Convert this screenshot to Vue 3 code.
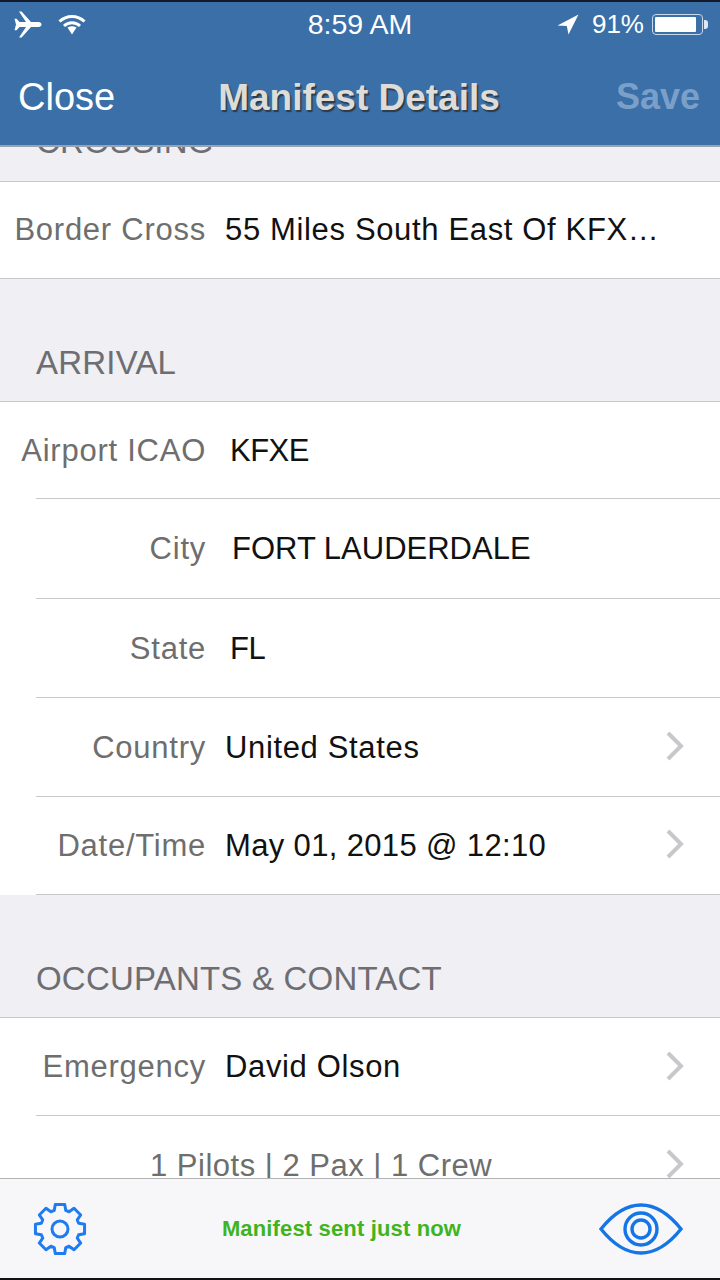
<template>
  <div class="screen">
    <header class="nav">
      <div class="status">
        <div class="status-left">
          <svg class="plane" width="30" height="27" viewBox="0 0 30 27">
            <path d="M14 11 7 .5h2.600L19 11h7.500c1.800 0 3 1 3 2.500s-1.200 2.500-3 2.500H19L9.600 26.500H7L14 16H7.500L4.600 19.200H2.500L4 13.500 2.500 7.800h2.100L7.500 11Z" fill="#fff" />
          </svg>
          <svg class="wifi" width="28" height="21" viewBox="0 0 28 21" fill="none" stroke="#fff" stroke-width="3">
            <path d="M1.500 7.500C8.500.7 19.500.7 26.500 7.500" />
            <path d="M6 12C10.500 7.800 17.500 7.800 22 12" />
            <path d="M9.500 13.500 14 20.500l4.500-7C15.500 11.800 12.500 11.800 9.500 13.500Z" fill="#fff" stroke="none" />
          </svg>
        </div>
        <span class="clock">8:59 AM</span>
        <div class="status-right">
          <svg width="22" height="21" viewBox="0 0 22 21">
            <path d="M21.500.5 11.500 20.500 9.800 12 .5 11.500Z" fill="#fff" />
          </svg>
          <span class="percent">91%</span>
          <div class="battery"><div class="battery-fill" :style="{ width: '91%' }"></div></div>
          <div class="battery-nub"></div>
        </div>
      </div>
      <div class="bar">
        <span class="close">Close</span>
        <span class="title">Manifest Details</span>
        <span class="save">Save</span>
      </div>
    </header>

    <main class="content">
      <section v-for="section in sections" :key="section.title" class="section">
        <h2 class="section-title">{{ section.title }}</h2>
        <ul class="rows" :class="{ inset: section.inset }">
          <li
            v-for="row in section.rows"
            :key="row.label + row.value"
            class="row"
            :class="row.size"
          >
            <span class="label">{{ row.label }}</span>
            <span class="value" :class="row.kind">{{ row.value }}</span>
            <svg v-if="row.more" class="chevron" width="20" height="32" viewBox="0 0 20 32" fill="none">
              <path d="M3 3 16 16 3 29" stroke="#c7c7cc" stroke-width="4" />
            </svg>
          </li>
        </ul>
      </section>
    </main>

    <footer class="toolbar">
      <svg class="gear" width="54" height="54" viewBox="0 0 54 54" fill="none" stroke="#1f7cf0" stroke-width="3">
        <path :d="gearPath" stroke-linejoin="round" />
        <circle cx="27" cy="27" r="8" />
      </svg>
      <span class="sent">Manifest sent just now</span>
      <svg class="eye" width="86" height="54" viewBox="0 0 86 54" fill="none" stroke="#1475e6" stroke-width="3.400">
        <path d="M3 27C15 12 29 3 43 3S71 12 83 27C71 42 57 51 43 51S15 42 3 27Z" />
        <circle cx="43" cy="27" r="16" />
        <circle cx="43" cy="27" r="9" />
      </svg>
    </footer>
  </div>
</template>

<script setup>
const sections = [
  {
    title: 'CROSSING',
    rows: [{ label: 'Border Cross', value: '55 Miles South East Of KFX…', size: 'h96' }],
  },
  {
    title: 'ARRIVAL',
    inset: true,
    rows: [
      { label: 'Airport ICAO', value: 'KFXE', kind: 'input', size: 'h97' },
      { label: 'City', value: 'FORT LAUDERDALE', kind: 'input-wide', size: 'h100' },
      { label: 'State', value: 'FL', kind: 'input' },
      { label: 'Country', value: 'United States', more: true },
      { label: 'Date/Time', value: 'May 01, 2015 @ 12:10', kind: 'date', size: 'h97', more: true },
    ],
  },
  {
    title: 'OCCUPANTS & CONTACT',
    rows: [
      { label: 'Emergency', value: 'David Olson', size: 'h98', more: true },
      { label: '', value: '1 Pilots | 2 Pax | 1 Crew', kind: 'muted', more: true },
    ],
  },
]

// 8 flat teeth around the centre of the settings cog
function buildGear() {
  const cx = 27
  const cy = 27
  const points = []
  for (let i = 0; i < 8; i++) {
    const a = (i * Math.PI) / 4 - Math.PI / 2
    const spots = [
      [-0.3, 19.5],
      [-0.19, 25],
      [0.19, 25],
      [0.3, 19.5],
    ]
    for (const [da, r] of spots) {
      points.push(`${(cx + r * Math.cos(a + da)).toFixed(2)} ${(cy + r * Math.sin(a + da)).toFixed(2)}`)
    }
  }
  return `M${points.join('L')}Z`
}

const gearPath = buildGear()
</script>

<style>
html,
body {
  margin: 0;
  background: #efeff4;
}
</style>

<style scoped>
.screen {
  width: 720px;
  height: 1280px;
  display: flex;
  flex-direction: column;
  overflow: hidden;
  background: #efeff4;
  font-family: "Liberation Sans", Arial, sans-serif;
}

/* 顶部导航 */
.nav {
  position: relative;
  z-index: 2;
  flex-shrink: 0;
  height: 147px;
  box-sizing: border-box;
  background: #3a6fa8;
  border-top: 2px solid #101a2a;
  border-bottom: 2px solid #9aa3ad;
  color: #fff;
}

.status {
  display: grid;
  grid-template-columns: 1fr auto 1fr;
  align-items: center;
  height: 44px;
  padding: 0 12px 0 12px;
}

.status-left {
  display: flex;
  align-items: center;
  gap: 16px;
}

.status-right {
  display: flex;
  align-items: center;
  justify-content: flex-end;
}

.clock {
  font-size: 28.5px;
}

.percent {
  font-size: 26px;
  margin: 0 8px 0 13px;
}

.battery {
  width: 51px;
  height: 21px;
  box-sizing: border-box;
  border: 1.5px solid #c9d8ea;
  border-radius: 4px;
  padding: 2px;
}

.battery-fill {
  height: 100%;
  background: #fff;
  border-radius: 1px;
}

.battery-nub {
  width: 4px;
  height: 9px;
  margin-left: 1px;
  background: #dfe8f2;
  border-radius: 0 3px 3px 0;
}

.bar {
  display: grid;
  grid-template-columns: 1fr auto 1fr;
  align-items: center;
  height: 99px;
  padding: 3px 20px 0 18px;
  box-sizing: border-box;
  line-height: 1;
}

.close {
  font-size: 38px;
}

.save {
  justify-self: end;
  font-size: 36px;
  font-weight: 700;
  color: #7aa0c9;
}

.title {
  font-size: 37px;
  font-weight: 700;
  color: #dedcd8;
  text-shadow: 1.5px 1.5px 1px #2e3a46;
}

/* 列表 */
.content {
  flex: 1;
  min-height: 0;
  overflow: hidden;
  margin-top: -25px;
}

.section-title {
  display: flex;
  margin: 0;
  box-sizing: border-box;
  padding: 0 36px 19px;
  height: 122px;
  align-items: flex-end;
  font-size: 33px;
  font-weight: 400;
  line-height: 38px;
  letter-spacing: 0.2px;
  color: #6d6d72;
}

.section:first-child .section-title {
  height: 59px;
  padding: 1px 36px 0;
  align-items: flex-start;
}

.rows {
  margin: 0;
  padding: 0;
  list-style: none;
  background: #fff;
  border-top: 1px solid #c8c7cc;
  border-bottom: 1px solid #c8c7cc;
}

/* 底线从 36px 开始 */
.rows.inset {
  border-bottom: none;
}

.rows.inset::after {
  content: "";
  display: block;
  height: 1px;
  margin-left: 36px;
  background: #c8c7cc;
}

.row {
  position: relative;
  display: flex;
  align-items: center;
  height: 99px;
  box-sizing: border-box;
  padding-right: 35px;
  font-size: 31px;
}

.h96 {
  height: 96px;
}

.h97 {
  height: 97px;
}

.h98 {
  height: 98px;
}

.h100 {
  height: 100px;
}

.row + .row::before {
  content: "";
  position: absolute;
  left: 36px;
  right: 0;
  top: -1px;
  height: 1px;
  background: #c8c7cc;
}

.label {
  flex: 0 0 206px;
  text-align: right;
  color: #6e6e6e;
  white-space: nowrap;
  letter-spacing: 0.75px;
}

.value {
  flex: 1;
  min-width: 0;
  margin-left: 19px;
  color: #111;
  white-space: nowrap;
  letter-spacing: 0.65px;
}

.input {
  margin-left: 24px;
  letter-spacing: -0.5px;
}

.input-wide {
  margin-left: 26px;
  letter-spacing: 0;
}

.date {
  letter-spacing: 0.35px;
}

.muted {
  margin-left: -56px;
  color: #6e6e6e;
  letter-spacing: 0.5px;
}

.chevron {
  flex-shrink: 0;
  margin-bottom: 3px;
}

/* 底部工具栏 */
.toolbar {
  position: relative;
  z-index: 2;
  flex-shrink: 0;
  height: 102px;
  box-sizing: border-box;
  display: flex;
  align-items: center;
  padding: 0 36px 0 33px;
  background: #f7f7f9;
  border-top: 1px solid #b2b2b2;
  border-bottom: 2px solid #111;
}

.sent {
  flex: 1;
  padding-right: 2px;
  text-align: center;
  font-size: 22px;
  font-weight: 700;
  letter-spacing: 0.15px;
  color: #3fb41e;
}
</style>
